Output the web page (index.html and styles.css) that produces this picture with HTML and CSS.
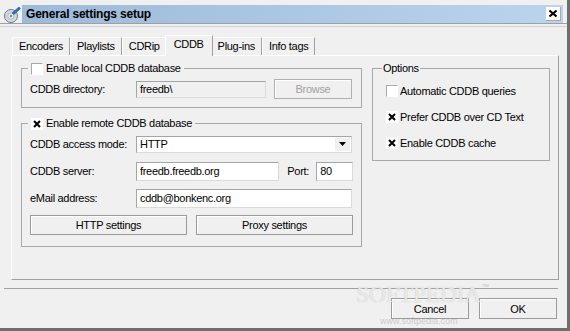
FILE: index.html
```html
<!DOCTYPE html>
<html lang="en">
<head>
<meta charset="UTF-8">
<title>General settings setup</title>
<link rel="stylesheet" href="styles.css">
</head>
<body>
  <div class="window">
    <div class="titlebar">
      <div class="app-icon">
        <svg width="18" height="18" viewBox="0 0 18 18">
          <circle cx="8" cy="11" r="6.5" fill="#d4dae2" stroke="#6c7a8c" stroke-width="1"/>
          <circle cx="8" cy="11" r="3.2" fill="#eef2f6" stroke="#9aa6b4" stroke-width="0.8"/>
          <circle cx="8" cy="11" r="1.2" fill="#6c7a8c"/>
          <path d="M9 8 L16 2 L17.5 3.5 L11 9.5 Z" fill="#2f6fc6" stroke="#1d4f9a" stroke-width="0.6"/>
        </svg>
      </div>
      <div class="caption">
        <span class="caption-text">General settings setup</span>
        <span class="close-box">
          <svg width="8" height="7" viewBox="0 0 8 7"><path d="M0.5 0.5 L7.5 6.5 M7.5 0.5 L0.5 6.5" stroke="#000" stroke-width="2"/></svg>
        </span>
      </div>
    </div>
    <div class="title-sep"></div>

    <div class="tabs">
      <div class="tab">Encoders</div>
      <div class="tab">Playlists</div>
      <div class="tab">CDRip</div>
      <div class="tab active">CDDB</div>
      <div class="tab">Plug-ins</div>
      <div class="tab">Info tags</div>
    </div>

    <div class="panel">
      <div class="left-col">
        <fieldset class="group local">
          <legend><span class="legend-inner"><span class="check"></span>Enable local CDDB database</span></legend>
          <div class="row">
            <span class="label">CDDB directory:</span>
            <span class="field disabled dir">freedb\</span>
            <span class="btn disabled browse">Browse</span>
          </div>
        </fieldset>

        <fieldset class="group remote">
          <legend><span class="legend-inner"><span class="check checked"><svg width="8" height="8" viewBox="0 0 8 8"><path d="M1 1 L7 7 M7 1 L1 7" stroke="#000" stroke-width="2"/></svg></span>Enable remote CDDB database</span></legend>
          <div class="row">
            <span class="label">CDDB access mode:</span>
            <span class="field combo">
              <span class="combo-value">HTTP</span>
              <span class="combo-arrow"><svg width="7" height="4" viewBox="0 0 7 4"><path d="M0 0 H7 L3.5 4 Z" fill="#000"/></svg></span>
            </span>
          </div>
          <div class="row">
            <span class="label">CDDB server:</span>
            <span class="field server">freedb.freedb.org</span>
            <span class="port-label">Port:</span>
            <span class="field port">80</span>
          </div>
          <div class="row">
            <span class="label">eMail address:</span>
            <span class="field email">cddb@bonkenc.org</span>
          </div>
          <div class="row buttons">
            <span class="btn wide">HTTP settings</span>
            <span class="btn wide">Proxy settings</span>
          </div>
        </fieldset>
      </div>

      <fieldset class="group options">
        <legend>Options</legend>
        <div class="opt"><span class="check"></span>Automatic CDDB queries</div>
        <div class="opt"><span class="check checked"><svg width="8" height="8" viewBox="0 0 8 8"><path d="M1 1 L7 7 M7 1 L1 7" stroke="#000" stroke-width="2"/></svg></span>Prefer CDDB over CD Text</div>
        <div class="opt"><span class="check checked"><svg width="8" height="8" viewBox="0 0 8 8"><path d="M1 1 L7 7 M7 1 L1 7" stroke="#000" stroke-width="2"/></svg></span>Enable CDDB cache</div>
      </fieldset>
    </div>

    <div class="footer-sep"></div>
    <div class="footer">
      <span class="btn action">Cancel</span>
      <span class="btn action">OK</span>
    </div>

    <div class="watermark">
      <span class="wm-big">SOFTPEDIA</span><span class="wm-tm">™</span>
      <span class="wm-url">www.softpedia.com</span>
    </div>
  </div>
</body>
</html>
```

FILE: styles.css
```css
* {
  box-sizing: border-box;
}
body {
  margin: 0;
  background-color: #f0f0f0;
  font-family: "Liberation Sans", Arial, sans-serif;
  font-size: 11px;
  letter-spacing: -0.3px;
  color: #000;
}
.window {
  position: relative;
  width: 570px;
  height: 331px;
  padding-top: 5px;
  background-color: #f0f0f0;
  border-right: 3px solid #6e6e6e;
  border-bottom: 3px solid #6e6e6e;
  overflow: hidden;
}
.titlebar {
  display: flex;
  height: 18px;
}
.app-icon {
  width: 22px;
  padding-left: 3px;
}
.caption {
  flex: 1;
  margin-right: 4px;
  display: flex;
  align-items: center;
  justify-content: space-between;
  padding-left: 4px;
  padding-right: 2px;
  background: linear-gradient(to right, #9dbad8, #bbd4ee);
}
.caption-text {
  font-size: 12px;
  font-weight: bold;
  letter-spacing: -0.2px;
}
.close-box {
  width: 15px;
  height: 14px;
  display: flex;
  align-items: center;
  justify-content: center;
  background-color: #fff;
  border-right: 1px solid #a8a8a8;
  border-bottom: 1px solid #a8a8a8;
}
.title-sep {
  height: 4px;
  border-top: 1px solid #a0a0a0;
  border-bottom: 1px solid #d2d2d2;
}
.tabs {
  display: flex;
  align-items: flex-end;
  height: 20px;
  margin-top: 8px;
  padding-left: 12px;
}
.tab {
  height: 18px;
  line-height: 17px;
  padding: 0 6px;
  border: 1px solid #fff;
  border-right-color: #a0a0a0;
  border-bottom: none;
  background-color: #f0f0f0;
}
.tab.active {
  position: relative;
  z-index: 1;
  height: 21px;
  line-height: 17px;
  margin: 0 -2px -1px;
  padding: 0 8px;
}
.panel {
  display: flex;
  align-items: flex-start;
  gap: 10px;
  width: 548px;
  height: 225px;
  margin-left: 11px;
  padding: 6px 8px 0 9px;
  border: 1px solid #fff;
  border-right-color: #a0a0a0;
  border-bottom-color: #a0a0a0;
}
.left-col {
  width: 341px;
}
.group {
  margin: 0;
  min-width: 0;
  border: 1px solid #a8a8a8;
}
.group legend {
  margin-left: -2px;
  padding: 0 3px;
  line-height: 13px;
  height: 13px;
}
.legend-inner {
  display: inline-flex;
  align-items: center;
  gap: 3px;
}
.local {
  padding: 4px 8px 8px 8px;
}
.remote {
  margin-top: 9px;
  padding: 4px 8px 11px 8px;
  display: flex;
  flex-direction: column;
  gap: 7px;
}
.options {
  width: 178px;
  padding: 6px 8px 7px 13px;
  display: flex;
  flex-direction: column;
  gap: 6px;
}
.options legend {
  margin-left: -4px;
  padding: 0 1px;
}
.check {
  width: 12px;
  height: 12px;
  flex: none;
  display: inline-flex;
  align-items: center;
  justify-content: center;
  background-color: #fff;
  border: 1px solid #fff;
  border-top-color: #a8a8a8;
  border-left-color: #a8a8a8;
}
.check.checked {
  border-color: #fff;
}
.opt {
  display: flex;
  align-items: center;
  gap: 2px;
  height: 20px;
}
.row {
  display: flex;
  align-items: center;
  height: 20px;
}
.label {
  width: 106px;
  flex: none;
}
.field {
  display: flex;
  align-items: center;
  height: 18px;
  padding-left: 3px;
  background-color: #fff;
  border: 1px solid #dadada;
  border-top-color: #a5a5a5;
  border-left-color: #a5a5a5;
}
.field.disabled {
  background-color: #f0f0f0;
}
.dir {
  width: 130px;
  height: 17px;
  margin-right: 8px;
}
.combo {
  width: 216px;
  height: 17px;
  justify-content: space-between;
  padding-right: 1px;
}
.combo-arrow {
  width: 15px;
  height: 13px;
  display: flex;
  align-items: center;
  justify-content: center;
  background-color: #f0f0f0;
}
.server {
  width: 144px;
  height: 19px;
}
.port-label {
  margin-left: 8px;
  width: 29px;
}
.port {
  width: 37px;
  height: 19px;
}
.email {
  width: 216px;
  height: 19px;
}
.btn {
  display: flex;
  align-items: center;
  justify-content: center;
  height: 20px;
  background-color: #f0f0f0;
  border: 1px solid #9a9a9a;
  box-shadow: inset 1px 1px 0 #fff;
}
.btn.disabled {
  color: #a0a0a0;
  border-color: #b0b0b0;
}
.browse {
  width: 78px;
}
.buttons {
  gap: 9px;
}
.wide {
  width: 157px;
}
.footer-sep {
  width: 554px;
  margin: 8px 0 0 4px;
  border-top: 1px solid #a0a0a0;
}
.footer {
  display: flex;
  justify-content: flex-end;
  gap: 10px;
  margin-top: 9px;
  padding-right: 10px;
}
.action {
  width: 78px;
  height: 21px;
}
.watermark {
  position: absolute;
  left: 356px;
  top: 281px;
  width: 130px;
  pointer-events: none;
}
.wm-big {
  font-family: "Liberation Serif", serif;
  font-size: 24px;
  letter-spacing: -0.5px;
  color: rgba(255, 255, 255, 0.7);
  text-shadow: 0 0 1px #b4b4b4;
}
.wm-tm {
  position: absolute;
  left: 126px;
  top: 2px;
  font-size: 7px;
  color: #c4c4c4;
}
.wm-url {
  position: absolute;
  left: 24px;
  top: 35px;
  font-size: 9px;
  letter-spacing: 0;
  color: rgba(160, 160, 160, 0.5);
}
```
